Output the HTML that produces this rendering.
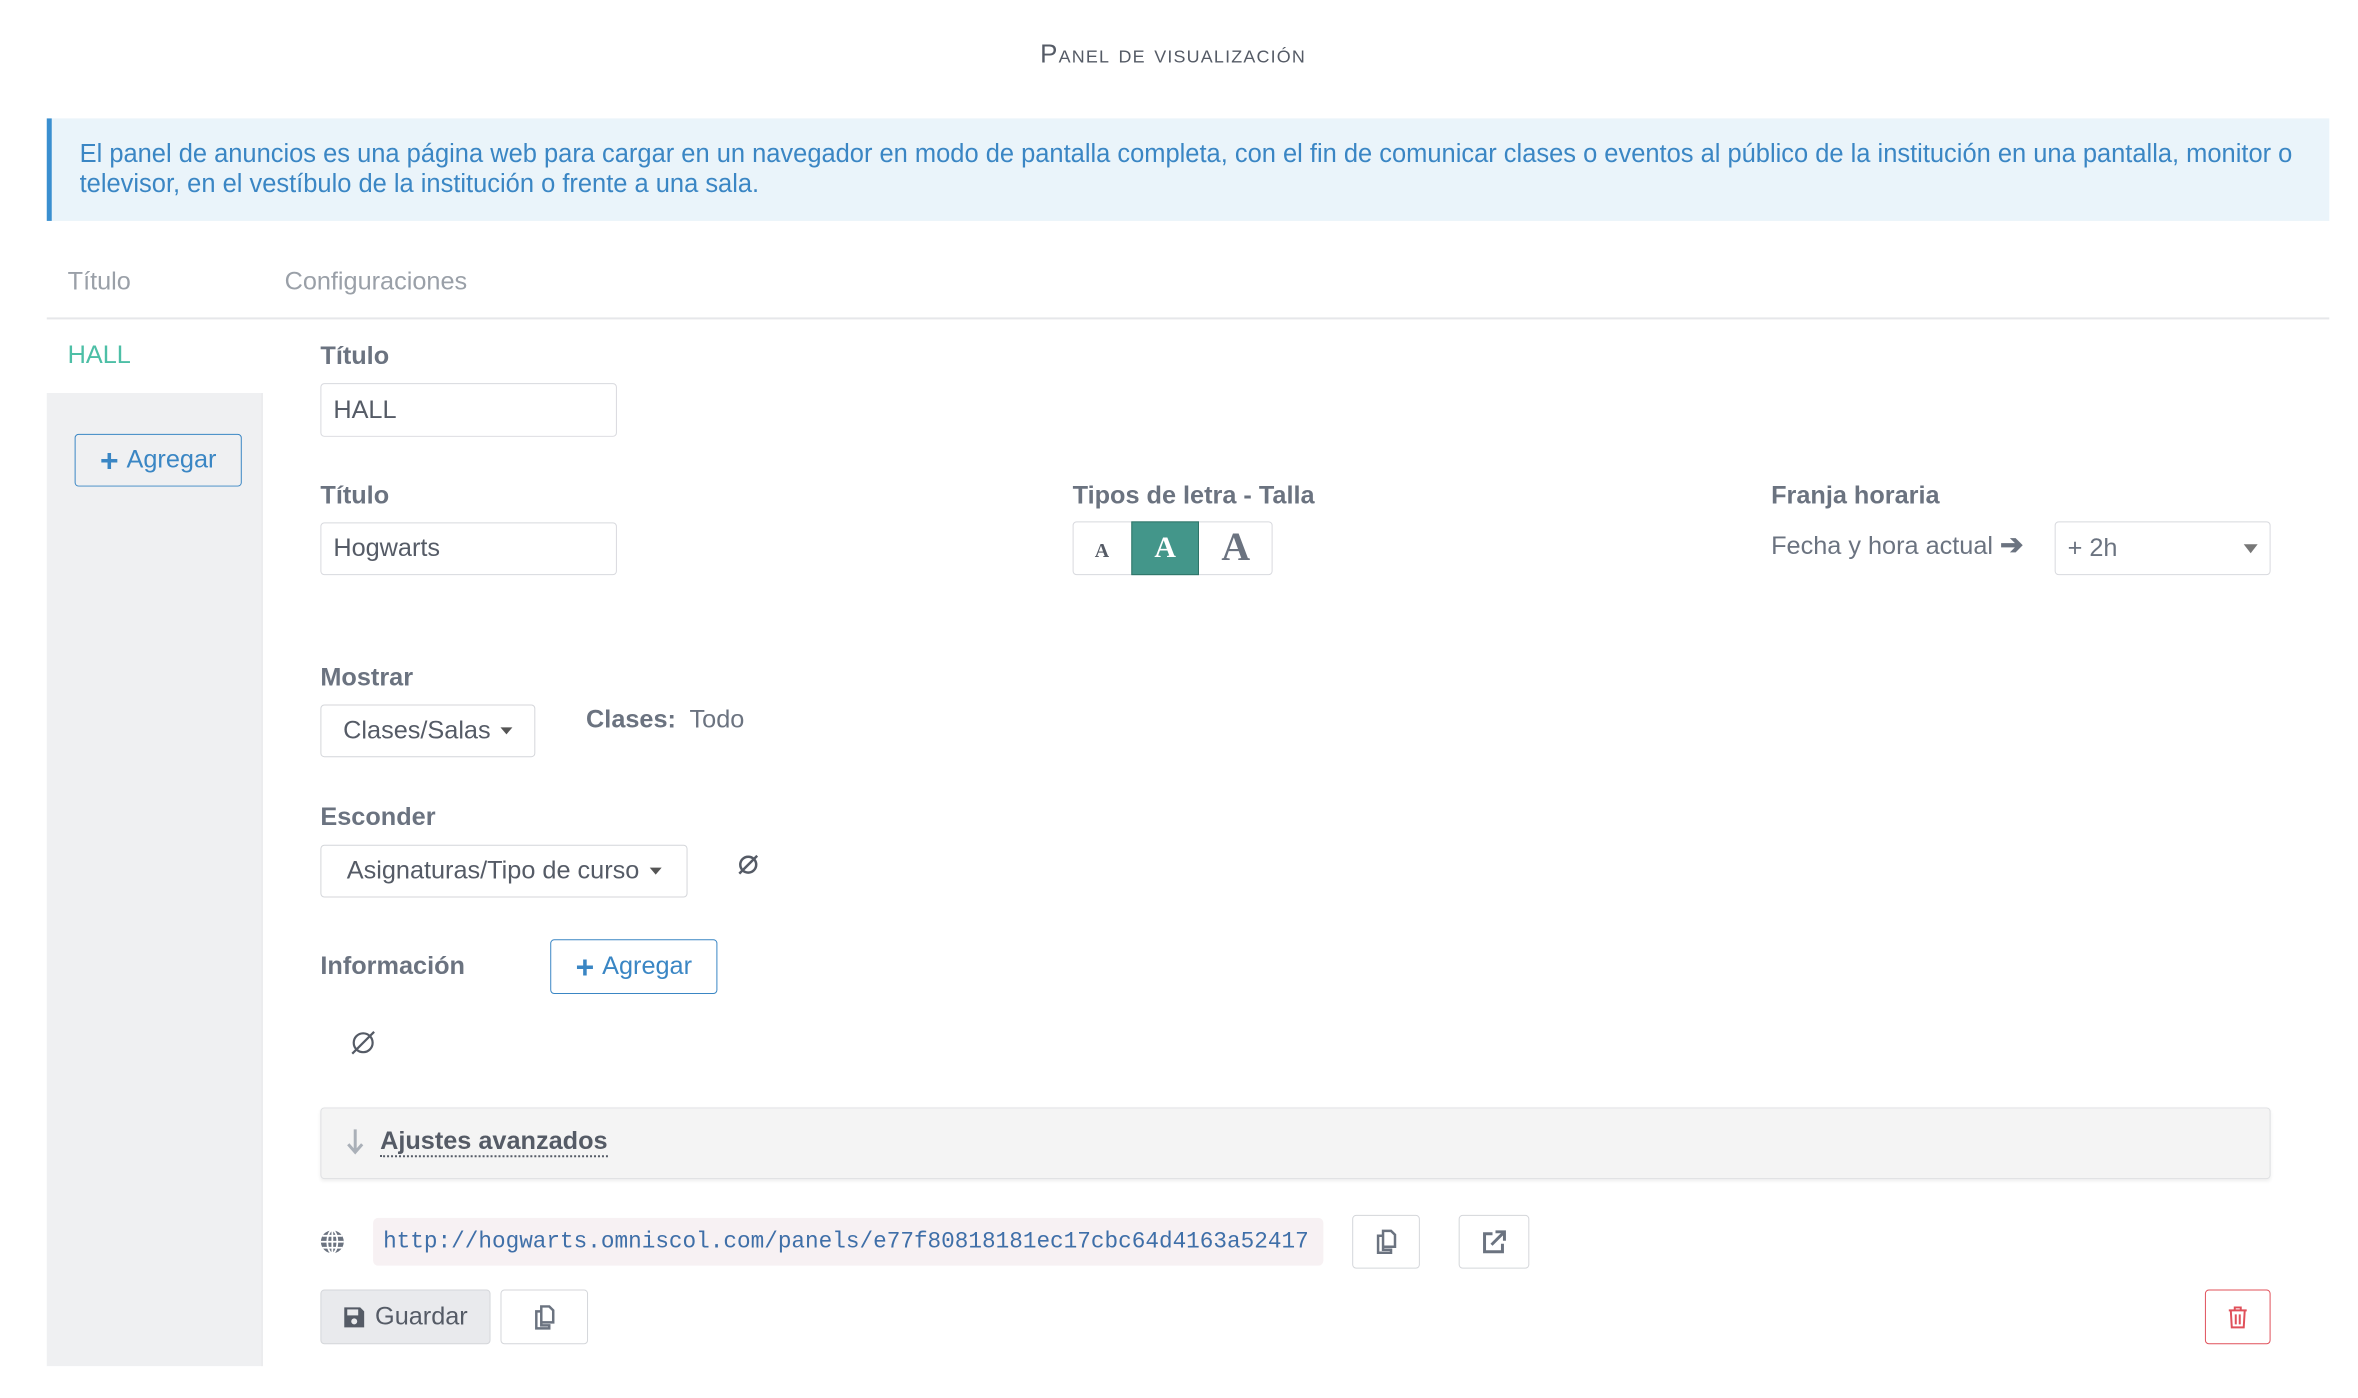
<!DOCTYPE html>
<html><head><meta charset="utf-8"><style>
*{box-sizing:border-box;margin:0;padding:0}
body{width:2358px;height:1398px;background:#fff;font-family:"Liberation Sans",Arial,sans-serif;color:#6b7380;position:relative;overflow:hidden}
#w{position:absolute;left:0;top:1px;width:2358px;height:1398px;transform:scale(0.995);transform-origin:0 0}
.a{position:absolute}
.lbl{position:absolute;font-weight:bold;font-size:25.4px;color:#6b7380}
.inp{position:absolute;border:1.5px solid #d8d9de;border-radius:4px;background:#fff;font-size:25.4px;color:#555b66;padding-left:12px;display:flex;align-items:center}
.btn{position:absolute;border:1.5px solid #d4d6da;border-radius:4px;background:#fff;display:flex;align-items:center;justify-content:center}
.pb{position:absolute;border:1.5px solid #3a86c4;border-radius:4px;color:#3a86c4;font-size:25.4px;display:flex;align-items:center;justify-content:center;gap:8px}
.caret{display:inline-block;border-left:6px solid transparent;border-right:6px solid transparent;border-top:7px solid #555;margin-left:10px;vertical-align:middle}
</style></head><body><div id="w">
<div class="a" style="left:0;width:2358px;top:38px;text-align:center;font-size:26px;color:#555b66;font-variant:small-caps;letter-spacing:1.2px">Panel de visualización</div>
<div class="a" style="left:47px;top:118px;width:2294px;height:103px;background:#eaf4fa;border-left:5px solid #3a8fd0"></div>
<div class="a" style="left:80px;top:139px;width:2240px;font-size:25.6px;line-height:30px;color:#3a86c4">El panel de anuncios es una página web para cargar en un navegador en modo de pantalla completa, con el fin de comunicar clases o eventos al público de la institución en una pantalla, monitor o televisor, en el vestíbulo de la institución o frente a una sala.</div>
<div class="a" style="left:68px;top:268px;font-size:25.4px;color:#9aa0a8">Título</div>
<div class="a" style="left:286px;top:268px;font-size:25.4px;color:#9aa0a8">Configuraciones</div>
<div class="a" style="left:47px;top:318px;width:2294px;height:2px;background:#e6e7ea"></div>
<div class="a" style="left:68px;top:342px;font-size:25.4px;color:#4dbfa6">HALL</div>
<div class="a" style="left:47px;top:394px;width:217px;height:978px;background:#eff0f2;border-right:1.5px solid #e4e5e8"></div>
<div class="pb" style="left:75px;top:435px;width:168px;height:53px"><b style="font-size:32px;line-height:1">+</b>Agregar</div>

<div class="lbl" style="left:322px;top:343px">Título</div>
<div class="inp" style="left:322px;top:384px;width:298px;height:54px">HALL</div>
<div class="lbl" style="left:322px;top:483px">Título</div>
<div class="inp" style="left:322px;top:524px;width:298px;height:53px">Hogwarts</div>

<div class="lbl" style="left:1078px;top:483px">Tipos de letra - Talla</div>
<div class="a" style="left:1078px;top:523px;width:201px;height:54px;border:1.5px solid #d8d9de;border-radius:4px"></div>
<div class="a" style="left:1078px;top:523px;width:59px;height:54px;display:flex;align-items:center;justify-content:center;font-weight:bold;font-size:20px;font-family:'Liberation Serif',serif;color:#555b66;padding-top:6px">A</div>
<div class="a" style="left:1137px;top:523px;width:68px;height:54px;background:#43968a;border:1.5px solid #2f7468;display:flex;align-items:center;justify-content:center;font-weight:bold;font-size:30px;font-family:'Liberation Serif',serif;color:#fff">A</div>
<div class="a" style="left:1205px;top:523px;width:74px;height:54px;display:flex;align-items:center;justify-content:center;font-weight:bold;font-size:40px;font-family:'Liberation Serif',serif;color:#6b7380;padding-bottom:4px">A</div>

<div class="lbl" style="left:1780px;top:483px">Franja horaria</div>
<div class="a" style="left:1780px;top:530px;font-size:25.4px">Fecha y hora actual <b style="font-size:28px">➔</b></div>
<div class="inp" style="left:2065px;top:523px;width:217px;height:54px;color:#6b7380">+ 2h<span class="a" style="right:12px;top:22px;border-left:7px solid transparent;border-right:7px solid transparent;border-top:9px solid #777"></span></div>

<div class="lbl" style="left:322px;top:666px">Mostrar</div>
<div class="btn" style="left:322px;top:707px;width:216px;height:53px;font-size:25.4px;color:#555b66">Clases/Salas<span class="caret"></span></div>
<div class="a" style="left:589px;top:708px;font-size:25.4px"><b>Clases:</b>&nbsp; Todo</div>

<div class="lbl" style="left:322px;top:806px">Esconder</div>
<div class="btn" style="left:322px;top:848px;width:369px;height:53px;font-size:25.4px;color:#555b66">Asignaturas/Tipo de curso<span class="caret"></span></div>
<svg class="a" style="left:740px;top:856px" width="24" height="24" viewBox="0 0 24 24"><circle cx="12" cy="12" r="8" fill="none" stroke="#555b66" stroke-width="2.5"/><path d="M3 21L21 3" stroke="#555b66" stroke-width="2.5"/></svg>

<div class="lbl" style="left:322px;top:956px">Información</div>
<div class="pb" style="left:553px;top:943px;width:168px;height:55px"><b style="font-size:32px;line-height:1">+</b>Agregar</div>
<svg class="a" style="left:352px;top:1034px" width="26" height="26" viewBox="0 0 26 26"><circle cx="13" cy="13" r="9.5" fill="none" stroke="#555b66" stroke-width="2.2"/><path d="M2 24L24 2" stroke="#555b66" stroke-width="2.2"/></svg>

<div class="a" style="left:322px;top:1112px;width:1960px;height:72px;background:#f4f4f4;border:1.5px solid #dedfe2;border-radius:4px;box-shadow:0 2px 3px rgba(0,0,0,.06)"></div>
<svg class="a" style="left:348px;top:1132px" width="18" height="28" viewBox="0 0 18 28"><path d="M9 2v22M2 17l7 8 7-8" fill="none" stroke="#aab0b8" stroke-width="3"/></svg>
<div class="a" style="left:382px;top:1132px;font-size:25.4px;font-weight:bold;color:#555b66;border-bottom:2px dotted #555b66;line-height:28px">Ajustes avanzados</div>

<svg class="a" style="left:321px;top:1234px" width="26" height="26" viewBox="0 0 26 26"><circle cx="13" cy="13" r="11.5" fill="#6b7380"/><path d="M1.5 13h23M3 7h20M3 19h20M13 1.5v23" stroke="#fff" stroke-width="1.8"/><ellipse cx="13" cy="13" rx="5" ry="11.5" fill="none" stroke="#fff" stroke-width="1.8"/></svg>
<div class="a" style="left:375px;top:1223px;width:955px;height:48px;background:#f7f1f3;border-radius:5px;font-family:'Liberation Mono',monospace;font-size:22.8px;color:#3f6fa8;line-height:48px;padding-left:10px;white-space:nowrap;overflow:hidden">http://hogwarts.omniscol.com/panels/e77f80818181ec17cbc64d4163a52417</div>
<div class="btn" style="left:1359px;top:1220px;width:68px;height:54px"><svg width="22" height="26" viewBox="0 0 22 26"><path d="M8 2h8l4 4v12H8z M3 7h5v14h8v3H3z" fill="none" stroke="#6b7380" stroke-width="2.5"/></svg></div>
<div class="btn" style="left:1466px;top:1220px;width:71px;height:54px"><svg width="26" height="26" viewBox="0 0 26 26"><path d="M11 5H3v18h18v-8" fill="none" stroke="#6b7380" stroke-width="3"/><path d="M10 16L22 4M14 3h9v9" fill="none" stroke="#6b7380" stroke-width="3"/></svg></div>

<div class="a" style="left:322px;top:1295px;width:171px;height:55px;background:#e9eaed;border:1.5px solid #d4d6da;border-radius:4px;display:flex;align-items:center;justify-content:center;gap:10px;font-size:25.4px;color:#555b66"><svg width="22" height="24" viewBox="0 0 22 24"><path d="M1 2h16l4 4v16H1z" fill="#555b66"/><rect x="4" y="4" width="11" height="6" fill="#e9eaed"/><circle cx="11" cy="16" r="3" fill="#e9eaed"/></svg>Guardar</div>
<div class="btn" style="left:503px;top:1295px;width:88px;height:55px"><svg width="22" height="26" viewBox="0 0 22 26"><path d="M8 2h8l4 4v12H8z M3 7h5v14h8v3H3z" fill="none" stroke="#6b7380" stroke-width="2.5"/></svg></div>
<div class="btn" style="left:2216px;top:1295px;width:66px;height:55px;border-color:#e0505a"><svg width="22" height="24" viewBox="0 0 22 24"><path d="M2 5h18M8 5V2h6v3M4 5l1 17h12l1-17M9 9v10M13 9v10" fill="none" stroke="#e0505a" stroke-width="2"/></svg></div>
</div></body></html>
